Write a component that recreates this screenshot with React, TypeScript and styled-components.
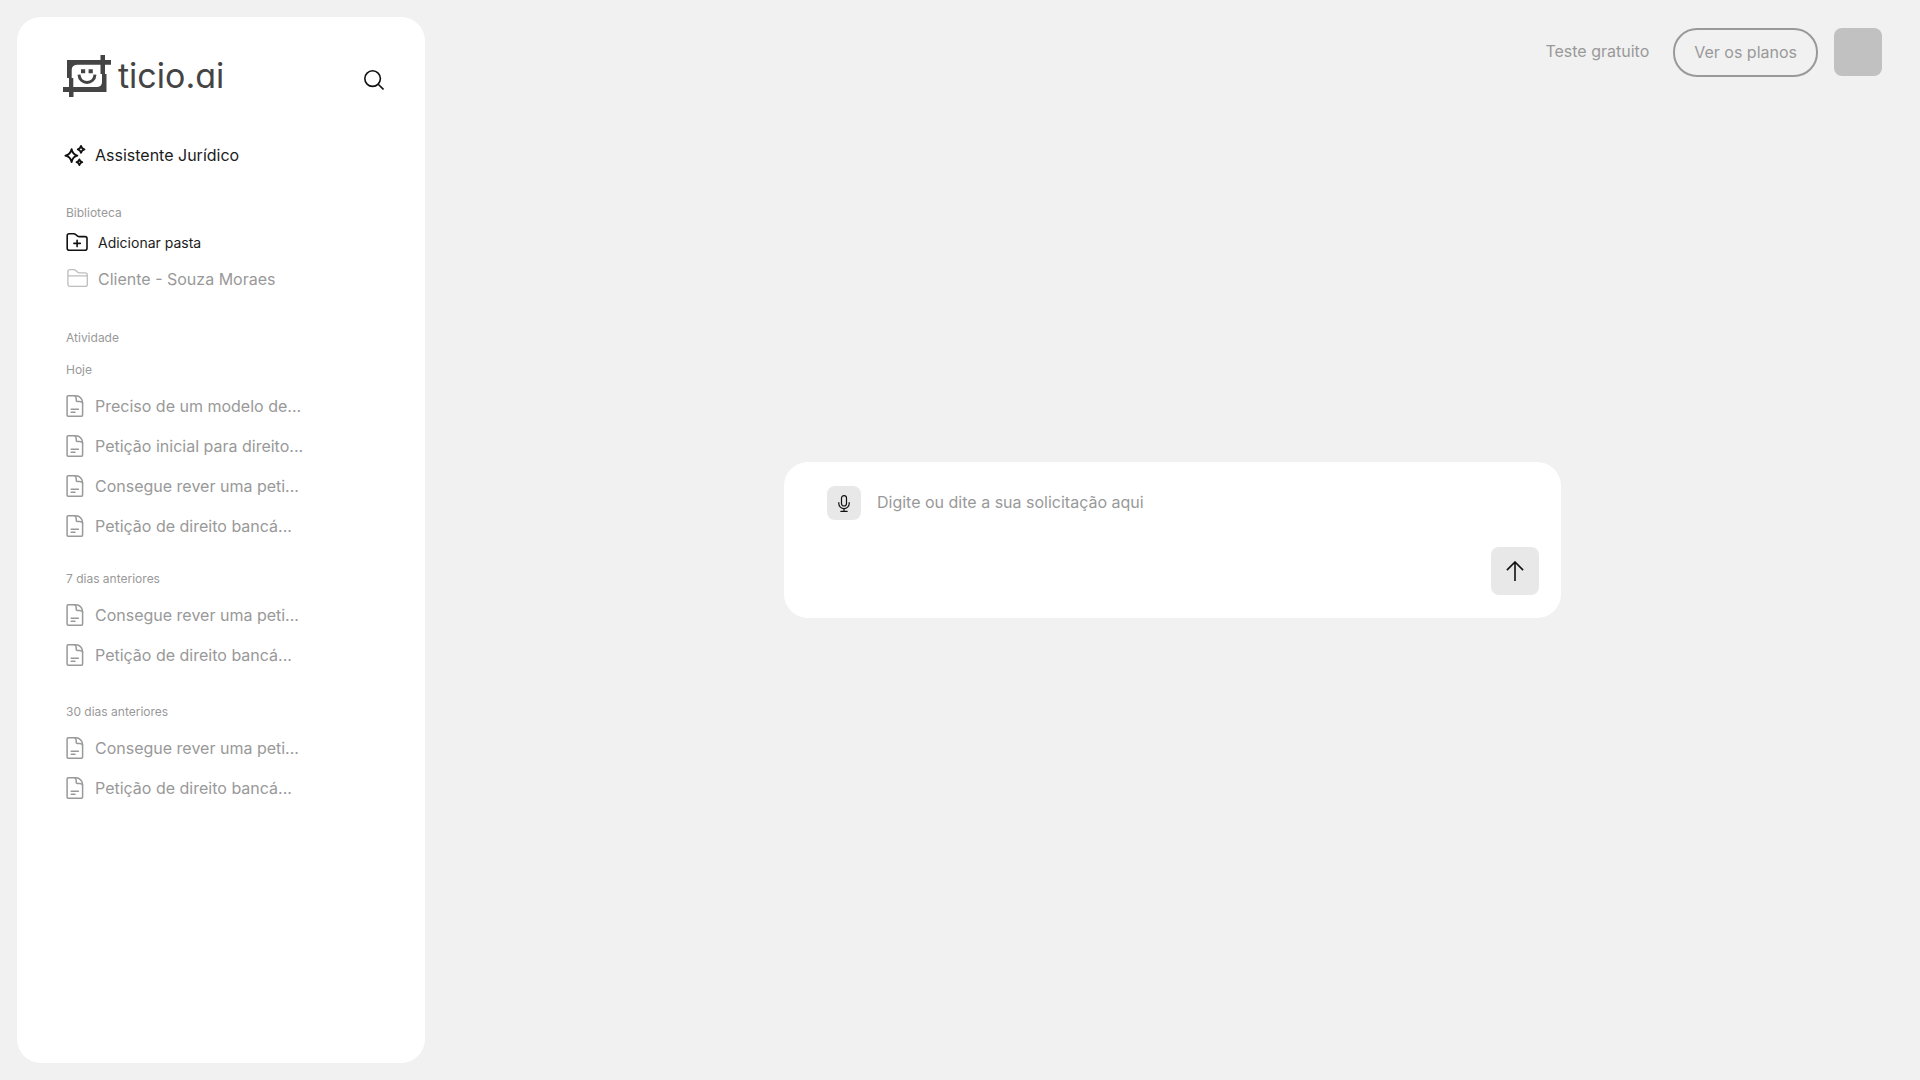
import React from "react";
import styled, { createGlobalStyle } from "styled-components";

const GlobalStyle = createGlobalStyle`
  *, *::before, *::after { box-sizing: border-box; }
  body {
    margin: 0;
    background: #f1f1f1;
    color: #1c1c1c;
    font-family: Inter, "Liberation Sans", sans-serif;
    font-size: 16px;
    line-height: 24px;
    font-weight: 400;
  }
  button, textarea { font: inherit; color: inherit; }
  h2, h3, ul { margin: 0; padding: 0; font-weight: inherit; }
  ul { list-style: none; }
  a { color: inherit; text-decoration: none; }
  svg { display: block; flex: none; }
`;

const Page = styled.div`
  display: flex;
  min-height: 100vh;
`;

const Sidebar = styled.aside`
  flex: 0 0 408px;
  margin: 17px 0 17px 17px;
  padding: 38px 41px 38px 46px;
  border-radius: 24px;
  background: #fff;
`;

const SidebarHeader = styled.header`
  display: flex;
  align-items: flex-end;
  justify-content: space-between;
`;

const Brand = styled.a`
  display: flex;
  align-items: center;
  gap: 7px;
  height: 42px;
  color: #444;
`;

const Wordmark = styled.span`
  font-size: 34px;
  line-height: 42px;
  font-feature-settings: "cv11";
`;

const SearchButton = styled.button`
  display: flex;
  align-items: center;
  height: 34px;
  padding: 0;
  border: 0;
  background: none;
  color: #111;
  cursor: pointer;
`;

const AssistantLink = styled.a`
  display: flex;
  align-items: center;
  gap: 8px;
  margin-top: 46px;
`;

const Label = styled.h3<{ $top: number }>`
  margin-top: ${(p) => p.$top}px;
  padding-left: 3px;
  color: #999;
  font-size: 12px;
  line-height: 16px;
`;

const SectionTitle = styled(Label).attrs({ as: "h2" })``;

const FolderList = styled.ul`
  padding: 4px 0 0 3px;
`;

const FolderButton = styled.button<{ $muted?: boolean }>`
  display: flex;
  align-items: center;
  gap: 10px;
  height: 36px;
  padding: 0;
  border: 0;
  background: none;
  color: ${(p) => (p.$muted ? "#999" : "#1c1c1c")};
  font-size: ${(p) => (p.$muted ? 16 : 14)}px;
  cursor: pointer;
`;

const HistoryList = styled.ul`
  padding: 8px 0 0 3px;
`;

const HistoryLink = styled.a`
  display: flex;
  align-items: center;
  gap: 11px;
  height: 40px;
  color: #999;
`;

const Main = styled.main`
  flex: 1;
  min-width: 0;
  display: grid;
  grid-template-rows: 1fr auto 1fr;
  justify-items: center;
`;

const TopBar = styled.nav`
  justify-self: end;
  display: flex;
  align-items: flex-start;
  padding: 28px 38px 0 0;
  color: #999;
`;

const TrialLink = styled.a`
  padding: 11px 0;
  margin-right: 24px;
`;

const PlansButton = styled.button`
  height: 49px;
  padding: 0 19px 2px;
  margin-right: 16px;
  border: 2px solid #999;
  border-radius: 24px;
  background: none;
  cursor: pointer;
`;

const Avatar = styled.button`
  width: 48px;
  height: 48px;
  padding: 0;
  border: 0;
  border-radius: 8px;
  background: #c1c1c1;
  cursor: pointer;
`;

const Composer = styled.form`
  display: flex;
  align-items: flex-start;
  width: 100%;
  max-width: 777px;
  padding: 24px 22px 23px 43px;
  border-radius: 24px;
  background: #fff;
`;

const SquareButton = styled.button<{ $size: number }>`
  display: flex;
  align-items: center;
  justify-content: center;
  flex: none;
  width: ${(p) => p.$size}px;
  height: ${(p) => p.$size}px;
  padding: 0;
  border: 0;
  border-radius: 8px;
  background: #e8e8e8;
  color: #111;
  cursor: pointer;
`;

const SendButton = styled(SquareButton)`
  align-self: flex-end;
`;

const Prompt = styled.textarea`
  flex: 1;
  min-width: 0;
  height: 109px;
  margin: 0 16px;
  padding: 4px 0;
  border: 0;
  outline: 0;
  resize: none;
  background: none;
  &::placeholder { color: #999; opacity: 1; }
`;

const LogoMark = () => (
  <svg width="48" height="42" viewBox="0 0 48 42" fill="currentColor" aria-hidden="true">
    <path
      fillRule="evenodd"
      d="M4 5H37.5V0H42V5H48V9.7H42V19H43.5V37H10.5V42H6V37H0V32H6V23H4ZM14 9.7Q8.7 10 8.7 15V23H10.3V32H33.5Q39 32 39 27V19H37.5V9.7Z"
    />
    <path d="M18 14.2h4.2v4H18zM25.6 14.2h4.2v4h-4.2z" />
    <path d="M16 19.6C16.6 30 31.4 30 32 19.6" fill="none" stroke="currentColor" strokeWidth="3" />
  </svg>
);

const SearchIcon = () => (
  <svg width="20" height="20" viewBox="0 0 20 20" fill="none" stroke="currentColor" strokeWidth="1.6" aria-hidden="true">
    <circle cx="8.6" cy="8.6" r="7.8" />
    <path d="M14.2 14.2L19.5 19.5" />
  </svg>
);

const SparklesIcon = () => (
  <svg width="24" height="24" viewBox="0 0 24 24" fill="none" stroke="#111" strokeWidth="1.9" strokeLinejoin="round" aria-hidden="true">
    <path d="M8.6 6.2Q9.8 11.6 14.4 12.6Q9.8 13.6 8.6 19Q7.4 13.6 2.4 12.6Q7.4 11.6 8.6 6.2Z" />
    <path d="M18 3Q18.7 5.7 21.4 6.4Q18.7 7.1 18 9.8Q17.3 7.1 14.8 6.4Q17.3 5.7 18 3Z" />
    <path d="M16.4 16.4Q17 18.6 19.2 19.2Q17 19.8 16.4 22Q15.8 19.8 13.6 19.2Q15.8 18.6 16.4 16.4Z" />
  </svg>
);

const FolderPlusIcon = () => (
  <svg width="22" height="20" viewBox="0 0 22 20" fill="none" stroke="#111" strokeWidth="1.6" strokeLinejoin="round" strokeLinecap="round" aria-hidden="true">
    <path d="M1.2 15.2V2.8Q1.2.8 3.2.8H7.8Q8.8.8 9.5 1.4L11.6 3.1Q12.2 3.6 13.2 3.6H19Q21 3.6 21 5.6V15.2Q21 17.2 19 17.2H3.2Q1.2 17.2 1.2 15.2Z" />
    <path d="M11.1 7.2V13.6M7.9 10.4H14.3" />
  </svg>
);

const FolderIcon = () => (
  <svg width="22" height="20" viewBox="0 0 22 20" fill="none" stroke="#bdbdbd" strokeWidth="1.3" strokeLinejoin="round" aria-hidden="true">
    <path d="M1.9 15.4V2.6Q1.9.7 3.8.7H7.8Q8.8.7 9.4 1.2L11.8 3.3Q12.4 3.8 13.4 3.8H19.4Q21.3 3.8 21.3 5.7V15.4Q21.3 17.3 19.4 17.3H3.8Q1.9 17.3 1.9 15.4ZM1.9 6.8H21.3" />
  </svg>
);

const DocumentIcon = () => (
  <svg width="18" height="22" viewBox="0 0 18 22" fill="none" stroke="currentColor" strokeWidth="1.5" strokeLinejoin="round" strokeLinecap="round" aria-hidden="true">
    <path d="M2.2.8H9.8C14 .8 16.6 4 16.6 8V20Q16.6 21.2 15.4 21.2H2.2Q1.1 21.2 1.1 20V2Q1.1.8 2.2.8Z" />
    <path d="M8.8 .9Q10.2 1.6 10.2 3.4V5.2Q10.2 6.4 11.4 6.4H13.6Q15.8 6.4 16.6 8M5.2 14.2H12.4M5.2 17.2H9" />
  </svg>
);

const MicIcon = () => (
  <svg width="12" height="17" viewBox="0 0 12 17" fill="none" stroke="currentColor" strokeWidth="1.2" strokeLinecap="round" aria-hidden="true">
    <rect x="3.5" y=".6" width="5" height="10.4" rx="2.5" />
    <path d="M.8 7.6V8.4A5.2 5.2 0 0 0 11.2 8.4V7.6M6 13.6V16.2M2.8 16.3H9.2" />
  </svg>
);

const ArrowUpIcon = () => (
  <svg width="18" height="20" viewBox="0 0 18 20" fill="none" stroke="currentColor" strokeWidth="1.6" aria-hidden="true">
    <path d="M9 20V1M.9 9.1L9 1L17.1 9.1" />
  </svg>
);

const history = [
  {
    label: "Hoje",
    top: 16,
    items: [
      "Preciso de um modelo de...",
      "Petição inicial para direito...",
      "Consegue rever uma peti...",
      "Petição de direito bancá...",
    ],
  },
  { label: "7 dias anteriores", top: 25, items: ["Consegue rever uma peti...", "Petição de direito bancá..."] },
  { label: "30 dias anteriores", top: 29, items: ["Consegue rever uma peti...", "Petição de direito bancá..."] },
];

export default function App() {
  return (
    <>
      <GlobalStyle />
      <Page>
        <Sidebar>
          <SidebarHeader>
            <Brand href="#">
              <LogoMark />
              <Wordmark>ticio.ai</Wordmark>
            </Brand>
            <SearchButton type="button" aria-label="Buscar">
              <SearchIcon />
            </SearchButton>
          </SidebarHeader>

          <AssistantLink href="#">
            <SparklesIcon />
            Assistente Jurídico
          </AssistantLink>

          <SectionTitle $top={38}>Biblioteca</SectionTitle>
          <FolderList>
            <li>
              <FolderButton type="button">
                <FolderPlusIcon />
                Adicionar pasta
              </FolderButton>
            </li>
            <li>
              <FolderButton type="button" $muted>
                <FolderIcon />
                Cliente - Souza Moraes
              </FolderButton>
            </li>
          </FolderList>

          <SectionTitle $top={33}>Atividade</SectionTitle>
          {history.map((group) => (
            <section key={group.label}>
              <Label $top={group.top}>{group.label}</Label>
              <HistoryList>
                {group.items.map((item) => (
                  <li key={item}>
                    <HistoryLink href="#">
                      <DocumentIcon />
                      {item}
                    </HistoryLink>
                  </li>
                ))}
              </HistoryList>
            </section>
          ))}
        </Sidebar>

        <Main>
          <TopBar>
            <TrialLink href="#">Teste gratuito</TrialLink>
            <PlansButton type="button">Ver os planos</PlansButton>
            <Avatar type="button" aria-label="Conta" />
          </TopBar>
          <Composer onSubmit={(e) => e.preventDefault()}>
            <SquareButton type="button" $size={34} aria-label="Ditar">
              <MicIcon />
            </SquareButton>
            <Prompt aria-label="Solicitação" placeholder="Digite ou dite a sua solicitação aqui" />
            <SendButton type="submit" $size={48} aria-label="Enviar">
              <ArrowUpIcon />
            </SendButton>
          </Composer>
        </Main>
      </Page>
    </>
  );
}
